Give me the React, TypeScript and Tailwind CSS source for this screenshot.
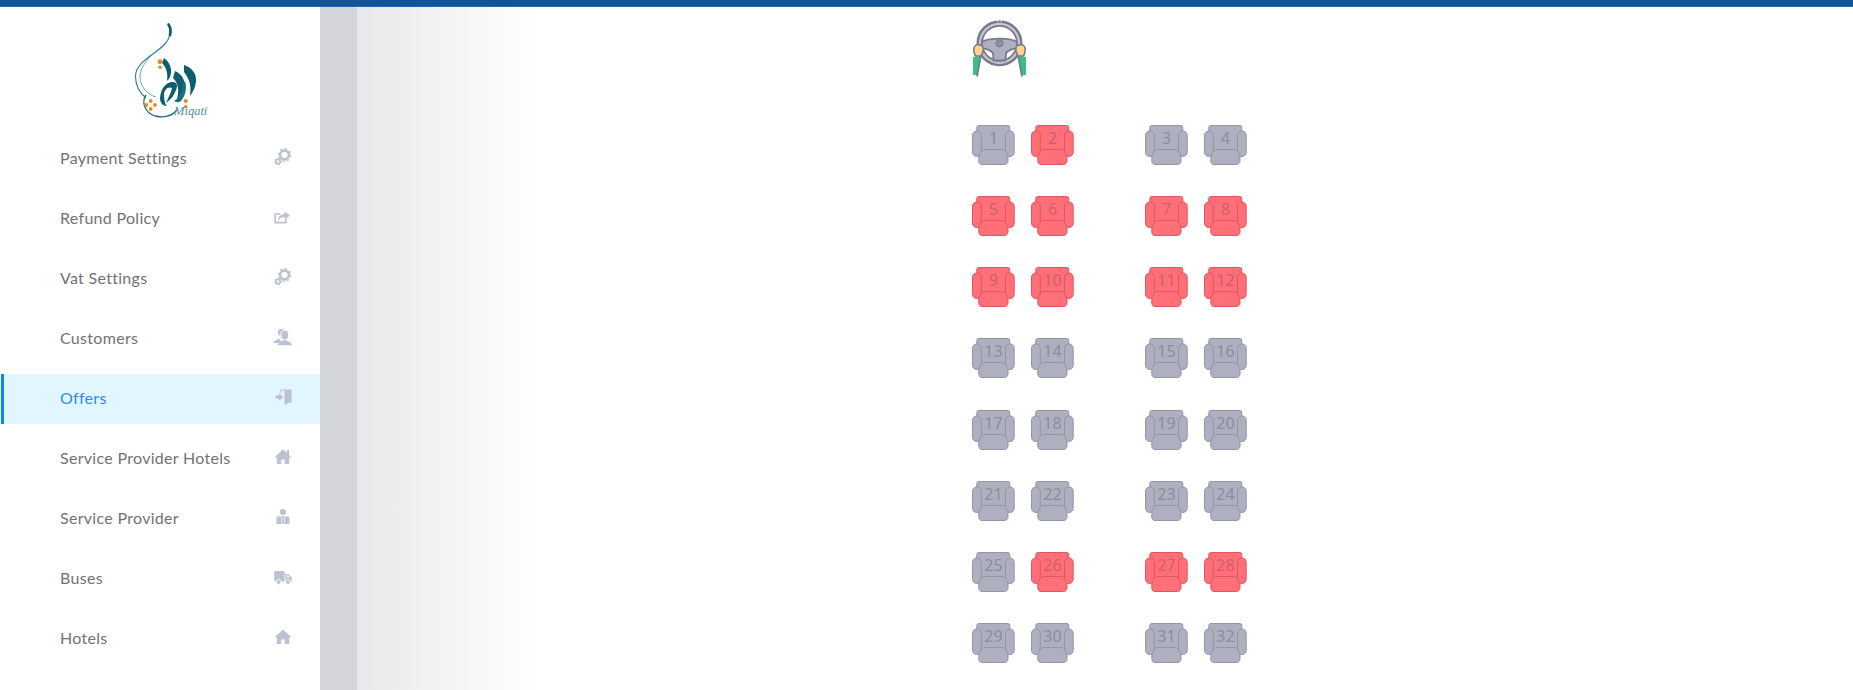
import type { ReactNode } from "react";

function Ico({ children }: { children: ReactNode }) {
  return (
    <svg width="18" height="18" viewBox="0 0 18 18" fill="#bcc2d0" className="-mt-[4px] shrink-0 overflow-visible">
      {children}
    </svg>
  );
}

const Cogs = () => (
  <Ico>
    <circle cx="10.500" cy="7" r="4.400" fill="none" stroke="#bcc2d0" strokeWidth="2.600" />
    <circle cx="10.500" cy="7" r="6.200" fill="none" stroke="#bcc2d0" strokeWidth="1.400" strokeDasharray="2.200 2.600" />
    <circle cx="4" cy="13.500" r="2.200" fill="none" stroke="#bcc2d0" strokeWidth="1.800" />
    <circle cx="4" cy="13.500" r="3.400" fill="none" stroke="#bcc2d0" strokeWidth="1" strokeDasharray="1.500 1.500" />
  </Ico>
);
const Share = () => (
  <Ico>
    <path d="M6 6H1.200V14.600H12V11" fill="none" stroke="#bcc2d0" strokeWidth="1.600" />
    <path d="M16.200 7.500L10.500 3.500V6C6.500 6 4 9 4 12.800C6 9.800 8 9 10.500 9V11.500Z" />
  </Ico>
);
const Users = () => (
  <Ico>
    <circle cx="7.300" cy="4.500" r="3.400" />
    <path d="M-1 15C0 12.500 3 11.800 5 10.500L7 13L5 15Z" />
    <ellipse cx="10.800" cy="7" rx="4" ry="5" stroke="#fff" strokeWidth="1" />
    <path d="M3.500 17.200C4 14.500 7.500 13.500 9 12.300H12.500C14 13.500 17.500 14.500 18.300 17.200Z" />
  </Ico>
);
const Door = () => (
  <Ico>
    <path d="M7 5V2H17V14H11" fill="none" stroke="#bcc2d0" strokeWidth="1.200" />
    <path d="M10.500 2L17 2V14L10.500 17Z" />
    <path d="M1.500 7.500H5V5L9.200 9L5 13V10.500H1.500Z" />
  </Ico>
);
const Home = ({ chimney }: { chimney?: boolean }) => (
  <Ico>
    <path d="M9 1.500L0.200 9.500H2.800V16H7.300V11.500H10.700V16H15.200V9.500H17.800Z" />
    {chimney && <rect x="12.800" y="2" width="2.200" height="5" />}
  </Ico>
);
const Tie = () => (
  <Ico>
    <circle cx="9" cy="4" r="3.100" />
    <path d="M2.500 16V10.200C2.500 9 3.500 8.300 5 8.300H13C14.500 8.300 15.500 9 15.500 10.200V16Z" />
    <path d="M6.800 8.500L7.900 10.300L7.300 14L9 15.800L10.700 14L10.100 10.300L11.200 8.500" fill="none" stroke="#fff" strokeWidth="0.700" />
  </Ico>
);
const Truck = () => (
  <Ico>
    <rect x="0.300" y="3" width="10.400" height="10.500" rx="1" />
    <path d="M11.500 6H14.600L17.700 9.500V13.500H11.500Z" />
    <path d="M13 7.200H14.200L16 9.400H13Z" fill="#fff" />
    <circle cx="4.500" cy="14" r="2.400" stroke="#fff" strokeWidth="0.800" />
    <circle cx="14" cy="14" r="2.400" stroke="#fff" strokeWidth="0.800" />
  </Ico>
);

const menu: { label: string; icon: ReactNode; active?: boolean }[] = [
  { label: "Payment Settings", icon: <Cogs /> },
  { label: "Refund Policy", icon: <Share /> },
  { label: "Vat Settings", icon: <Cogs /> },
  { label: "Customers", icon: <Users /> },
  { label: "Offers", icon: <Door />, active: true },
  { label: "Service Provider Hotels", icon: <Home chimney /> },
  { label: "Service Provider", icon: <Tie /> },
  { label: "Buses", icon: <Truck /> },
  { label: "Hotels", icon: <Home /> },
];

const booked = new Set([2, 5, 6, 7, 8, 9, 10, 11, 12, 26, 27, 28]);

function Logo() {
  return (
    <svg width="74" height="102" viewBox="0 0 74 102" fill="none">
      <path d="M35 3C38 10 37 16 30 23C20 33 2 40 1.500 54C1.500 66 7 72 12 76" stroke="#2f7f8c" strokeWidth="1.100" />
      <path d="M36 8C37 16 32 21 25 27C15 35 6 44 6 55C6 65 14 73 22 75" stroke="#4a949f" strokeWidth="0.800" />
      <path d="M34.500 2.500C36.500 5 37 8 36 13" stroke="#0f5f70" strokeWidth="2.800" strokeLinecap="round" />
      <path d="M12 73C7 80 11 91 21 94C30 96 38 94 43 88" stroke="#1f7280" strokeWidth="1.300" />
      <path d="M50 43C57 45 63 51 62 60C61 66 59 70 56 74C57 66 57 59 50 50Z" fill="#0d5f6f" />
      <path d="M41 49C48 52 52 59 50 66C48 71 46 74 43 77C45 70 45 62 39 56Z" fill="#0d5f6f" />
      <path d="M30 36C36 40 39 48 36 55C35 57 34 58 33 59C34 53 33 46 28 41Z" fill="#0d5f6f" />
      <path d="M26 76C27 66 32 60 39 60C43 60 44 64 42 68C40 74 36 78 32 81C34 76 37 71 38 66C34 64 30 68 30 73C30 78 31 82 33 84C29 84 26 81 26 76Z" fill="#0d5f6f" />
      <path d="M51 59C53 65 52 73 47 79C44 81 42 80 40 79C44 77 49 70 49 62Z" fill="#17707f" />
      <g fill="#d98f2b">
        <circle cx="26" cy="39.700" r="2.400" />
        <circle cx="26" cy="45.300" r="1.800" />
        <circle cx="16.700" cy="79" r="1.900" />
        <circle cx="12.300" cy="83" r="1.900" />
        <circle cx="21" cy="83" r="1.900" />
        <circle cx="16.700" cy="87" r="1.900" />
        <circle cx="51.700" cy="79" r="2.100" />
        <circle cx="51.700" cy="84.700" r="1.700" />
      </g>
      <text x="40" y="93" fontFamily="'Liberation Serif', serif" fontStyle="italic" fontSize="12.500" fill="#4f929d">
        Miqati
      </text>
    </svg>
  );
}

function Wheel() {
  const line = "#777a8a";
  return (
    <svg width="54" height="58" viewBox="0 0 54 58" fill="none">
      <path d="M0 37l7.300-1-3.500 19H0z" fill="#35c283" />
      <path d="M53 37l-7.300-1 3.500 19H53z" fill="#35c283" />
      <path d="M8 35L4 56.500M45 35L49 56.500" stroke={line} strokeWidth="1.800" />
      <circle cx="26.500" cy="23.300" r="21.800" fill="#c6c7d1" stroke={line} strokeWidth="2.400" />
      <circle cx="26.500" cy="23.300" r="17.500" fill="#fff" stroke={line} strokeWidth="1.800" />
      <path d="M24 0.500h1.200M27.800 0.500h1.200" stroke="#fff" strokeWidth="2.400" />
      <path d="M9 22C15 17.500 38 17.500 44 22L44 29C39 28 36 30 33 33L32.500 40.500H20.500L20 33C17 30 14 28 9 29Z" fill="#aeb0bd" stroke={line} strokeWidth="1.800" strokeLinejoin="round" />
      <circle cx="26.500" cy="23.300" r="3.600" fill="#8d8fa0" stroke={line} strokeWidth="1" />
      <path d="M0.800 30C0.500 27 2.500 24.500 5 24.500L9.500 26C10.800 29 10 33 8 36L2.500 36C1.500 34.500 1 32.500 .8 30Z" fill="#fdd58a" stroke={line} strokeWidth="1.600" />
      <path d="M52.200 30C52.500 27 50.500 24.500 48 24.500L43.500 26C42.200 29 43 33 45 36L50.500 36C51.500 34.500 52 32.500 52.200 30Z" fill="#fdd58a" stroke={line} strokeWidth="1.600" />
    </svg>
  );
}

function Seat({ n }: { n: number }) {
  const red = booked.has(n);
  const fill = red ? "#ff6f78" : "#aeb0bf";
  const line = red ? "#e05663" : "#9395a9";
  return (
    <div className="relative h-[40px] w-[42px]">
      <svg width="42" height="40" viewBox="0 0 42 40" className="block overflow-visible">
        <path d="M4.800 2.500a2 2 0 0 1 2-2h29a2 2 0 0 1 2 2V30H4.800z" fill={fill} stroke={line} strokeWidth="1" />
        <rect x="0.500" y="6" width="8.800" height="25.500" rx="4.200" fill={fill} stroke={line} strokeWidth="1" />
        <rect x="33.500" y="6" width="8.700" height="25.500" rx="4.200" fill={fill} stroke={line} strokeWidth="1" />
        <path d="M12 24.500H31C33 24.500 35 28.500 36 32V36C36 38 34.500 39.500 32.500 39.500H10C8 39.500 6.800 38 6.800 36V32C7.500 28.500 10 24.500 12 24.500Z" fill={fill} stroke={line} strokeWidth="1" />
      </svg>
      <span
        className={`absolute left-0 top-[3px] w-[43px] text-center font-['Noto_Sans',sans-serif] text-[16px] leading-[20px] ${red ? "text-[#cf5f6e]" : "text-[#8b8da1]"}`}
      >
        {n}
      </span>
    </div>
  );
}

export default function App() {
  const seats = Array.from({ length: 32 }, (_, i) => i + 1);
  return (
    <div className="flex h-[690px] flex-col overflow-hidden bg-white font-['Lato',sans-serif]">
      <div className="h-[7px] shrink-0 border-b border-[#2b65a8] bg-[#14539a]" />
      <div className="flex min-h-0 flex-1">
        <aside className="w-[320px] shrink-0 bg-white">
          <div className="flex h-[127px] pl-[134px] pt-[15px]">
            <Logo />
          </div>
          <nav className="flex flex-col gap-[10px]">
            {menu.map(({ label, icon, active }) => (
              <a
                key={label}
                className={`flex h-[50px] items-center justify-between pr-[28px] text-[16px] tracking-[0.3px] ${
                  active
                    ? "ml-px border-l-[3px] border-[#0a8cf5] bg-[#e2f6ff] pl-[56px] text-[#2a8cf0]"
                    : "pl-[60px] text-[#707276]"
                }`}
              >
                <span className="-mt-[2px]">{label}</span>
                {icon}
              </a>
            ))}
          </nav>
        </aside>
        <main className="min-w-0 flex-1 bg-[linear-gradient(to_right,#d5d6dc_37px,#e8e8eb_37px,#ffffff_215px)] pl-[652px] pt-[13px]">
          <div className="pl-px">
            <Wheel />
          </div>
          <div className="mt-[47px] grid w-max grid-cols-[59px_114px_59px_42px] gap-y-[31.140px]">
            {seats.map((n) => (
              <Seat key={n} n={n} />
            ))}
          </div>
        </main>
      </div>
    </div>
  );
}
